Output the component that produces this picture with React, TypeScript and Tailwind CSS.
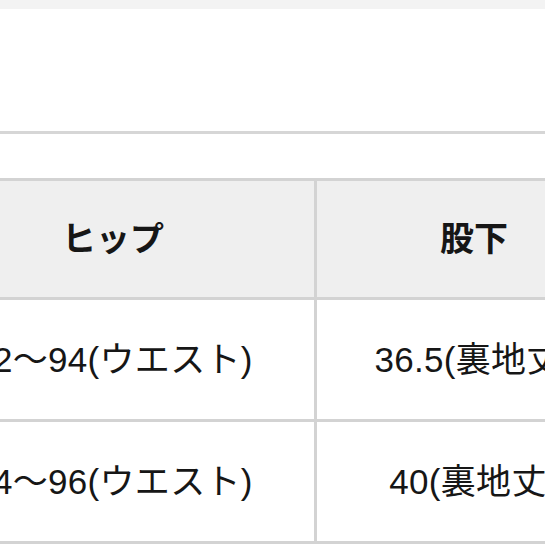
const rows = [
  { hip: "92～94(ウエスト)", inseam: "36.5(裏地丈)" },
  { hip: "94～96(ウエスト)", inseam: "40(裏地丈)" },
];

export default function App() {
  return (
    <div className="w-[545px] h-[545px] overflow-hidden bg-white text-[#161616] font-['Liberation_Sans','Noto_Sans_CJK_JP',sans-serif]">
      {/* top strip */}
      <div className="h-[9px] bg-[#f3f3f3]" />
      <div className="h-[122px] bg-white" />
      <div className="h-[3px] bg-[#d6d6d6]" />
      <div className="h-[44px] bg-white" />

      {/* size table */}
      <table className="ml-[-91px] table-fixed border-collapse w-[722px]">
        <colgroup>
          <col className="w-[405px]" />
          <col className="w-[317px]" />
        </colgroup>
        <thead>
          <tr className="h-[119px] bg-[#efefef]">
            <th className="border-[3px] border-[#d3d3d3] text-[34px] font-bold text-center align-middle pt-[1px]">
              ヒップ
            </th>
            <th className="border-[3px] border-[#d3d3d3] text-[34px] font-bold text-center align-middle pt-[1px]">
              股下
            </th>
          </tr>
        </thead>
        <tbody>
          {rows.map((r) => (
            <tr key={r.hip} className="h-[122px] bg-white">
              <td className="border-[3px] border-[#d3d3d3] text-[35px] text-center align-middle pt-[2px] tracking-[0.3px]">
                {r.hip}
              </td>
              <td className="border-[3px] border-[#d3d3d3] text-[35px] text-center align-middle pt-[2px] tracking-[0.3px]">
                {r.inseam}
              </td>
            </tr>
          ))}
        </tbody>
      </table>
    </div>
  );
}
